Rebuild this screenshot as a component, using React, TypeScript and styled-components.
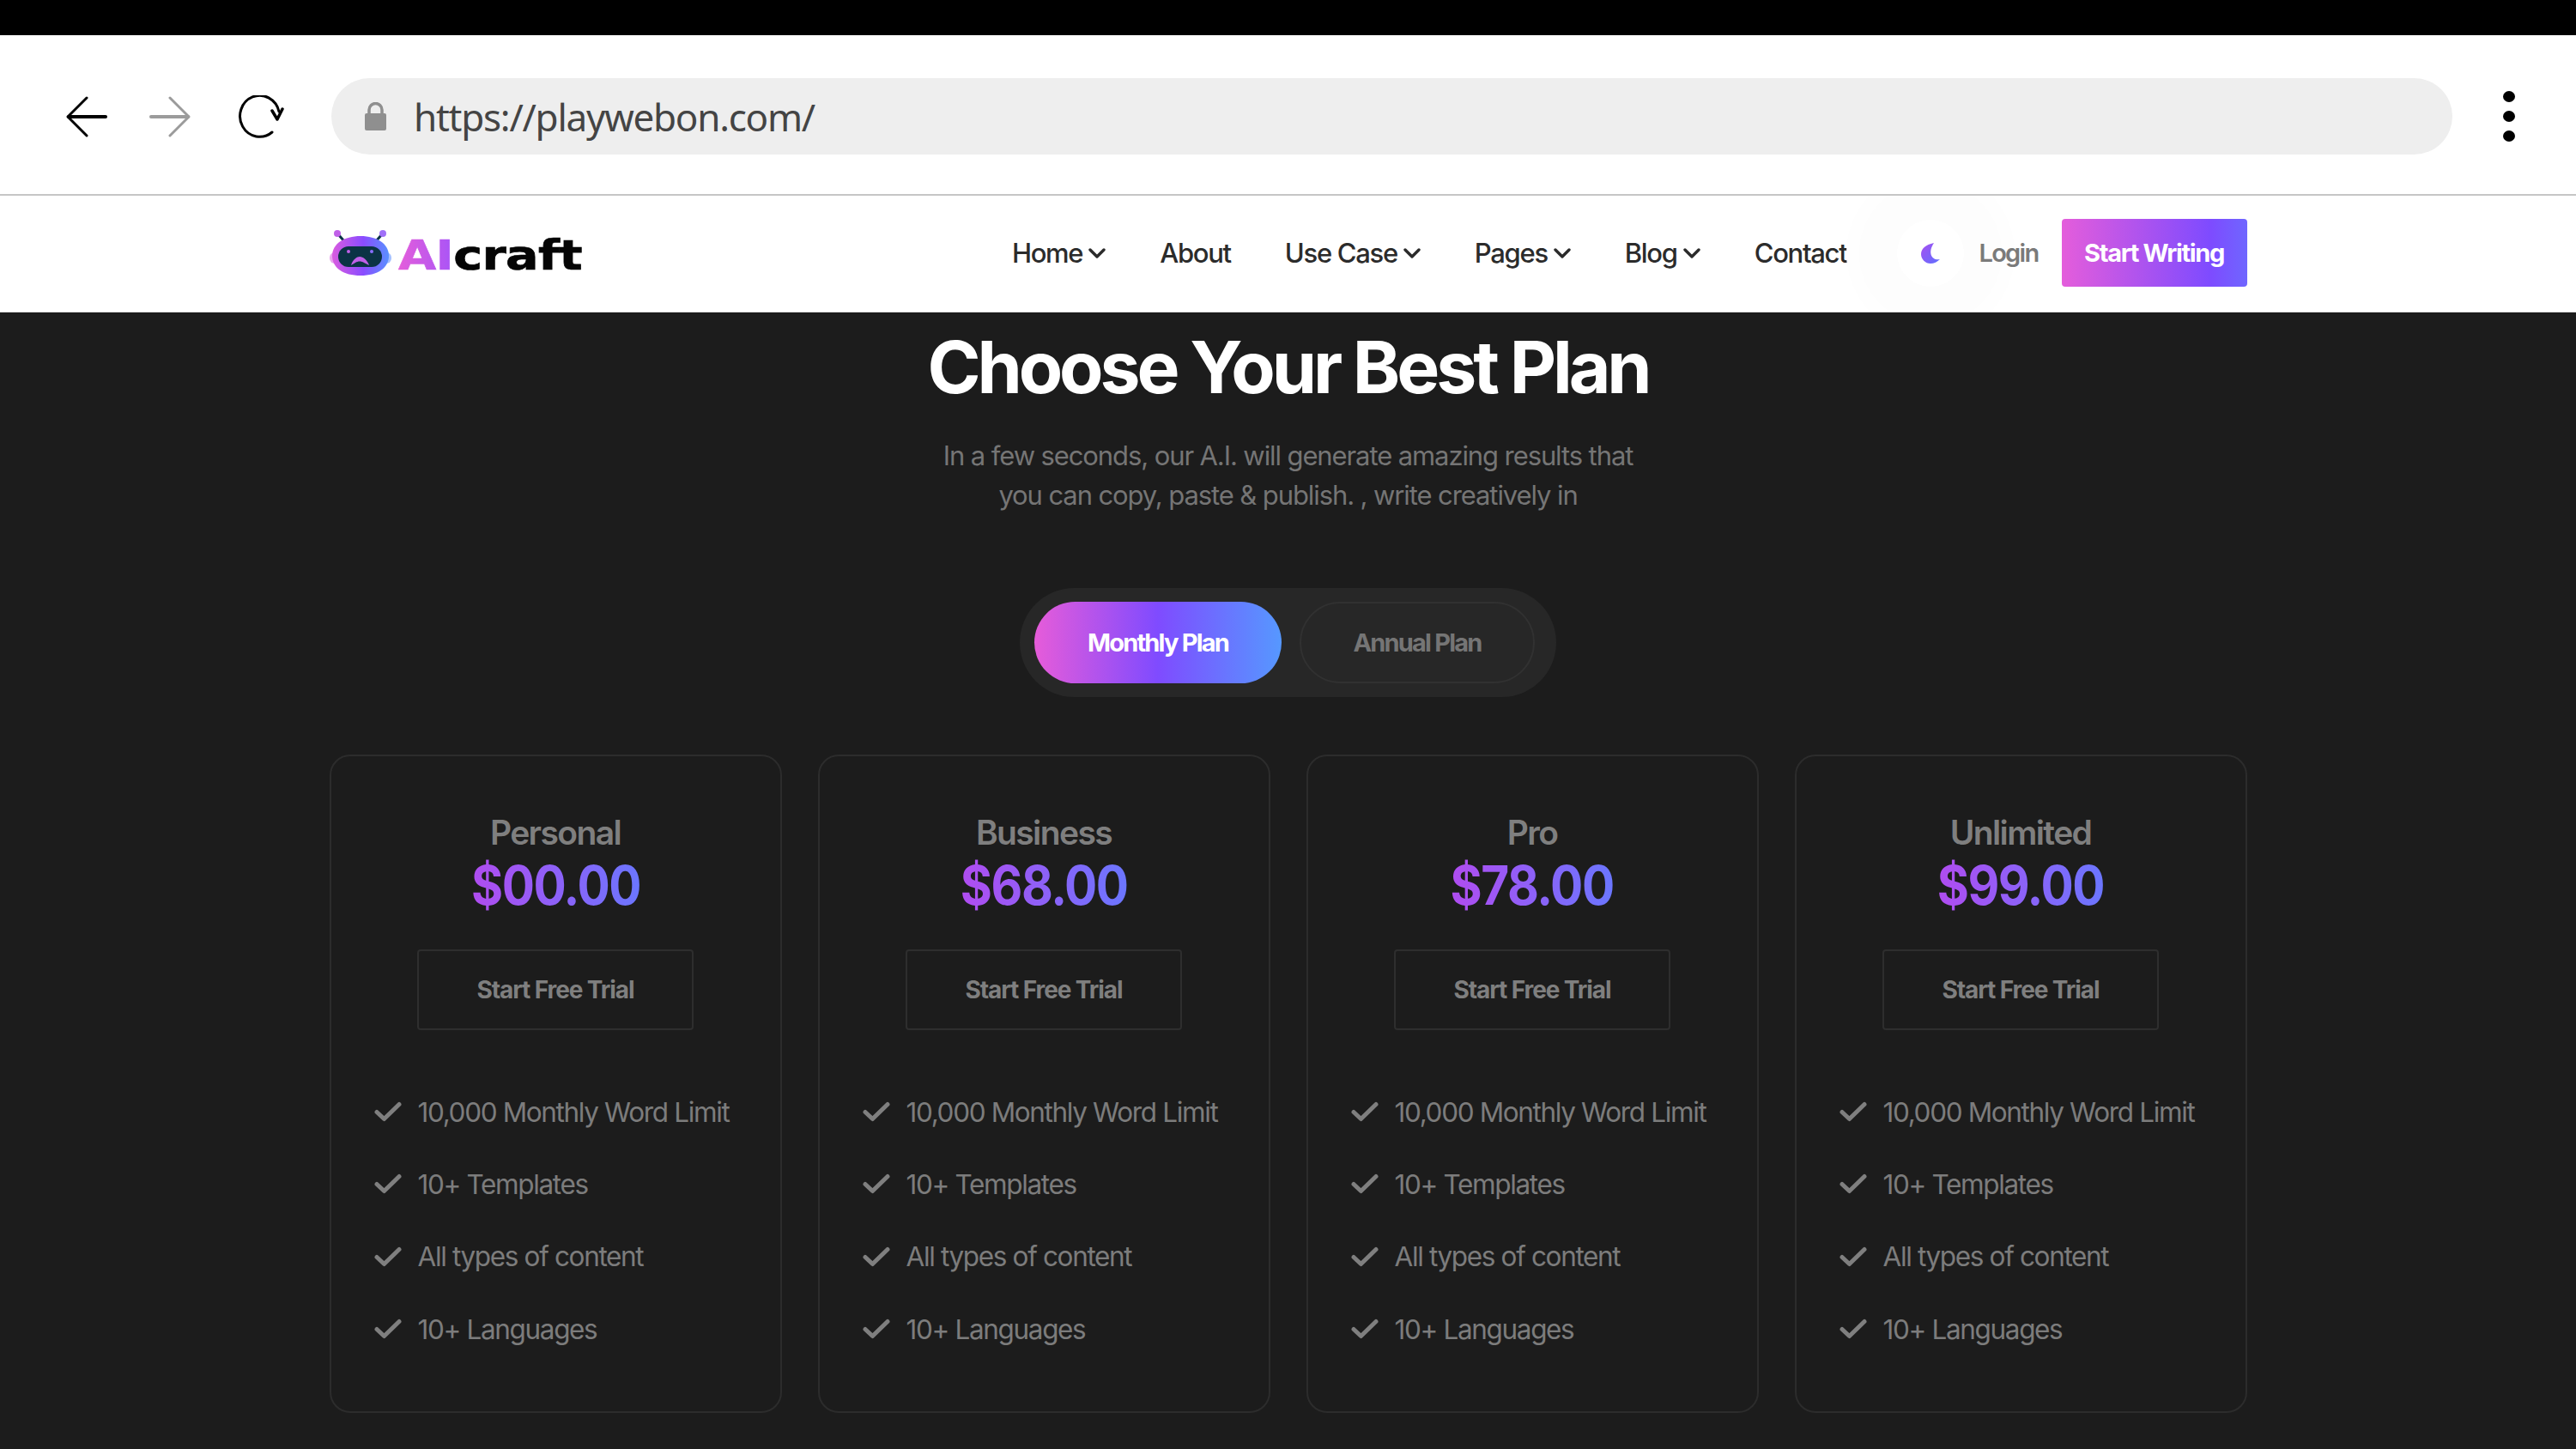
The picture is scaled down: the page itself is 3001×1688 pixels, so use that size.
import React from 'react';
import styled, { createGlobalStyle } from 'styled-components';

const Global = createGlobalStyle`
  html, body { margin: 0; padding: 0; background: #1c1c1c; }
  * { box-sizing: border-box; }
`;

const Page = styled.div`
  width: 3001px; height: 1688px; overflow: hidden; display: flex; flex-direction: column;
  font-family: Inter, "Liberation Sans", sans-serif; background: #1c1c1c;
`;
const TopStrip = styled.div`height: 41px; background: #000; flex: none;`;
const BrowserBar = styled.div`
  height: 187px; flex: none; background: #fff; border-bottom: 2px solid #c6c6c6;
  display: flex; align-items: center; padding: 4px 0 0 77px;
`;
const NavIcon = styled.svg<{ $ml: number }>`flex: none; margin-left: ${p => p.$ml}px; display: block;`;
const UrlPill = styled.div`
  width: 2471px; height: 89px; margin-left: 55px; border-radius: 45px; background: #eee;
  display: flex; align-items: center; padding-left: 39px; flex: none;
`;
const UrlText = styled.span`
  font-family: "Noto Sans", sans-serif; font-size: 44px; color: #444; margin-left: 32px; letter-spacing: -1.25px;
`;
const Kebab = styled.div`
  margin-left: 59px; display: flex; flex-direction: column; gap: 10px; flex: none;
`;
const Dot = styled.i`display: block; width: 14px; height: 13px; border-radius: 50%; background: #000;`;

const SiteNav = styled.nav`
  height: 135px; flex: none; background: #fff; display: flex; align-items: center; justify-content: center; overflow: hidden; padding-bottom: 2px;
`;
const NavInner = styled.div`width: 2234px; display: flex; align-items: center; justify-content: space-between;`;
const Logo = styled.div`display: flex; align-items: center; gap: 8px;`;
const LogoText = styled.span`
  font-family: "DejaVu Sans", sans-serif; font-weight: 700; font-size: 48px; line-height: 48px; letter-spacing: -0.5px; color: #050505;
  display: inline-block; transform: scaleX(1.19); transform-origin: left center; margin-top: 5px; -webkit-text-stroke: 0.7px;
`;
const LogoAi = styled.span`
  background: linear-gradient(90deg, #e45ddb, #a855f7); -webkit-background-clip: text; background-clip: text; color: transparent;
`;
const NavRight = styled.div`display: flex; align-items: center;`;
const Menu = styled.div`display: flex; align-items: center; gap: 63px;`;
const MenuItem = styled.span`
  font-size: 31px; font-weight: 500; color: #2b2b2b; display: flex; align-items: center; gap: 7px; letter-spacing: -1.3px;
`;
const MoonWrap = styled.div`
  width: 56px; height: 56px; margin-left: 70px; display: flex; align-items: center; justify-content: center; position: relative;
  &::before { content: ''; position: absolute; left: -70px; top: -70px; width: 196px; height: 196px; border-radius: 50%;
    background: radial-gradient(circle, #fff 0 28%, #fdfdfd 28% 60%, #fefefe 60% 100%); }
  svg { position: relative; }
`;
const Login = styled.span`font-size: 29px; font-weight: 600; color: #7a7a7a; margin-left: 28px; letter-spacing: -1.7px; position: relative;`;
const WriteBtn = styled.div`
  width: 216px; height: 79px; margin-left: 27px; border-radius: 4px; color: #fff; font-size: 29px; font-weight: 700;
  display: flex; align-items: center; justify-content: center; letter-spacing: -1.35px; position: relative;
  background: linear-gradient(90deg, #e45ddb 0%, #7e4bff 80%, #6f66ff 100%);
`;

const Main = styled.main`
  flex: 1; background: #1c1c1c; border-top: 1px solid #ddd; display: flex; flex-direction: column; align-items: center; padding-top: 20px;
`;
const Title = styled.h1`
  margin: 0; font-size: 84px; line-height: 88px; font-weight: 700; color: #fff; letter-spacing: -4.1px;
`;
const Sub = styled.p`
  margin: 36px 0 0; font-size: 31px; line-height: 46px; font-weight: 400; color: #757575; text-align: center; letter-spacing: -1.1px;
`;
const Toggle = styled.div`
  margin-top: 85px; width: 625px; height: 127px; border-radius: 64px; background: #272727; display: flex; align-items: center; padding-left: 17px; gap: 21px;
`;
const PlanBtn = styled.div<{ $active?: boolean }>`
  height: 95px; border-radius: 48px; width: ${p => (p.$active ? 288 : 274)}px; display: flex; align-items: center; justify-content: center;
  font-size: 29px; font-weight: 700; letter-spacing: -1.8px;
  color: ${p => (p.$active ? '#fff' : '#757575')};
  border: ${p => (p.$active ? 'none' : '2px solid #313131')};
  background: ${p => (p.$active ? 'linear-gradient(90deg, #e65cd9 0%, #7f4bff 50%, #5698ff 100%)' : 'transparent')};
`;
const Cards = styled.div`
  margin-top: 67px; width: 2234px; display: grid; grid-template-columns: repeat(4, 527px); justify-content: space-between;
`;
const Card = styled.section`
  height: 767px; border: 2px solid #2c2c2c; border-radius: 24px; display: flex; flex-direction: column; align-items: center; padding-top: 65px;
`;
const PlanName = styled.h3`margin: 0; font-size: 39px; line-height: 48px; font-weight: 600; color: #7f7f7f; letter-spacing: -1.6px;`;
const Price = styled.div`
  font-size: 63px; line-height: 72px; font-weight: 700; letter-spacing: -1.6px; margin-top: 1px; transform: scaleX(0.9);
  background: linear-gradient(90deg, #b04cf0, #6b76ff); -webkit-background-clip: text; background-clip: text; color: transparent;
`;
const TrialBtn = styled.div`
  margin-top: 39px; width: 322px; height: 94px; border: 2px solid #2e2e2e; border-radius: 4px; display: flex; align-items: center; justify-content: center;
  font-size: 28px; font-weight: 700; color: #7f7f7f; letter-spacing: -1.1px;
`;
const Features = styled.ul`
  list-style: none; margin: 74px 0 0; padding: 0 0 0 50px; width: 100%; display: flex; flex-direction: column; gap: 42.4px;
`;
const Feature = styled.li`
  display: flex; align-items: center; gap: 19px; height: 42px; font-size: 31.5px; color: #7c7c7c; letter-spacing: -1.35px;
`;

const Check = () => (
  <svg width="32" height="24" viewBox="0 0 32 24" fill="none" stroke="#7f7f7f" strokeWidth="5" strokeLinecap="round" strokeLinejoin="round">
    <path d="M3 12.5 L11.5 20.5 L29 3.5" />
  </svg>
);
const Chevron = () => (
  <svg width="20" height="14" viewBox="0 0 20 14" fill="none" stroke="#2b2b2b" strokeWidth="3.4" strokeLinecap="round" strokeLinejoin="round">
    <path d="M2 3 L10 11 L18 3" />
  </svg>
);
const Robot = () => (
  <svg width="72" height="54" viewBox="0 0 72 54">
    <defs>
      <linearGradient id="rb" x1="0" x2="1" y1="0" y2="0">
        <stop offset="0" stopColor="#d95be0" /><stop offset="0.55" stopColor="#8a4cff" /><stop offset="1" stopColor="#5a90ff" />
      </linearGradient>
    </defs>
    <path d="M10 5 L17 13 M61 5 L54 13" stroke="#0b3345" strokeWidth="3" />
    <circle cx="9" cy="4" r="4" fill="#c060e8" /><circle cx="62" cy="4" r="4" fill="#a070f8" />
    <rect x="0" y="26" width="72" height="13" rx="6" fill="url(#rb)" opacity="0.55" />
    <path d="M36 7 C55 7 69 16 69 30 C69 44 56 53 36 53 C16 53 3 44 3 30 C3 16 17 7 36 7 Z" fill="url(#rb)" />
    <rect x="10" y="19" width="51" height="24" rx="12" fill="#0b3345" />
    <circle cx="22" cy="25" r="2" fill="#c060e8" /><circle cx="49" cy="25" r="2" fill="#8a70ff" />
    <path d="M25 41 C27 34 32 31 35 31 C39 31 44 35 46 41 L40 38 C37 36 33 36 30 38 Z" fill="#c060e8" />
  </svg>
);

const features = ['10,000 Monthly Word Limit', '10+ Templates', 'All types of content', '10+ Languages'];
const plans = [
  { name: 'Personal', price: '$00.00' },
  { name: 'Business', price: '$68.00' },
  { name: 'Pro', price: '$78.00' },
  { name: 'Unlimited', price: '$99.00' },
];
const menu = [
  { label: 'Home', drop: true }, { label: 'About' }, { label: 'Use Case', drop: true },
  { label: 'Pages', drop: true }, { label: 'Blog', drop: true }, { label: 'Contact' },
];

export default function App() {
  return (
    <Page>
      <Global />
      <TopStrip />
      <BrowserBar>
        <NavIcon $ml={0} width="48" height="48" viewBox="0 0 48 48" fill="none" stroke="#000" strokeLinecap="round" strokeLinejoin="round">
          <path d="M24 2 L2 24 L24 46" strokeWidth="3" /><path d="M3 24 H46" strokeWidth="4" />
        </NavIcon>
        <NavIcon $ml={49} width="48" height="48" viewBox="0 0 48 48" fill="none" stroke="#9b9b9b" strokeLinecap="round" strokeLinejoin="round">
          <path d="M24 2 L46 24 L24 46" strokeWidth="3" /><path d="M2 24 H45" strokeWidth="4" />
        </NavIcon>
        <NavIcon $ml={54} width="55" height="50" viewBox="0 0 55 50" fill="none" stroke="#000" strokeLinecap="round" strokeLinejoin="round">
          <path d="M41 43 A 23 24 0 1 1 49 19" strokeWidth="3" />
          <path d="M41 18 L47 28 L53 16" strokeWidth="3.5" />
        </NavIcon>
        <UrlPill>
          <svg width="25" height="33" viewBox="0 0 25 33">
            <path d="M5 14 V9 a7.5 7.5 0 0 1 15 0 V14" fill="none" stroke="#8f8f8f" strokeWidth="3.5" />
            <rect x="0" y="13" width="25" height="20" rx="2" fill="#8f8f8f" />
          </svg>
          <UrlText>https://playwebon.com/</UrlText>
        </UrlPill>
        <Kebab><Dot /><Dot /><Dot /></Kebab>
      </BrowserBar>
      <SiteNav>
        <NavInner>
          <Logo>
            <Robot />
            <LogoText><LogoAi>AI</LogoAi>craft</LogoText>
          </Logo>
          <NavRight>
            <Menu>
              {menu.map(m => (
                <MenuItem key={m.label}>{m.label}{m.drop && <Chevron />}</MenuItem>
              ))}
            </Menu>
            <MoonWrap>
              <svg width="22" height="24" viewBox="0 0 22 24">
                <defs>
                  <linearGradient id="mg" x1="0" x2="1" y1="0" y2="1"><stop offset="0" stopColor="#a84ff0" /><stop offset="1" stopColor="#5f70ff" /></linearGradient>
                </defs>
                <path d="M15 0 C5 2 0 7 0 13 C0 19 5 24 11 24 C15 24 19 22 22 19 C13 21 7 12 15 0 Z" fill="url(#mg)" />
              </svg>
            </MoonWrap>
            <Login>Login</Login>
            <WriteBtn>Start Writing</WriteBtn>
          </NavRight>
        </NavInner>
      </SiteNav>
      <Main>
        <Title>Choose Your Best Plan</Title>
        <Sub>In a few seconds, our A.I. will generate amazing results that<br />you can copy, paste &amp; publish. , write creatively in</Sub>
        <Toggle>
          <PlanBtn $active>Monthly Plan</PlanBtn>
          <PlanBtn>Annual Plan</PlanBtn>
        </Toggle>
        <Cards>
          {plans.map(p => (
            <Card key={p.name}>
              <PlanName>{p.name}</PlanName>
              <Price>{p.price}</Price>
              <TrialBtn>Start Free Trial</TrialBtn>
              <Features>
                {features.map(f => (
                  <Feature key={f}><Check />{f}</Feature>
                ))}
              </Features>
            </Card>
          ))}
        </Cards>
      </Main>
    </Page>
  );
}
